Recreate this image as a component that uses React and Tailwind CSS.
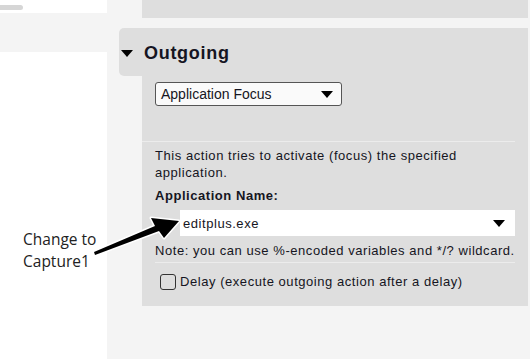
import React from 'react';

const Tri = ({ className = '' }) => (
  <svg width="12" height="7" viewBox="0 0 12 7" className={className}>
    <polygon points="0,0 12,0 6,7" fill="#000" />
  </svg>
);

export default function App() {
  return (
    <div
      className="relative flex w-[530px] h-[359px] overflow-hidden bg-white text-[#151522]"
      style={{ fontFamily: '"Liberation Sans", Arial, sans-serif' }}
    >
      {/* Sidebar */}
      <div className="w-[107px] shrink-0 bg-white">
        <div className="h-[13px] pt-[5px]">
          <div className="w-[23px] h-[5px] rounded-r bg-[#d6d6d6]" />
        </div>
        <div className="h-[39px] bg-[#f4f4f4]" />
      </div>

      {/* Main */}
      <div className="flex-1 flex flex-col bg-[#f4f4f4]">
        <div className="ml-[35px] mr-[2px] h-[18px] bg-[#dedede]" />

        {/* Section header */}
        <div className="mt-[10px] ml-[12px] mr-[2px] h-[48px] flex items-center gap-[11px] pl-[2px] bg-[#dedede] rounded-l-[5px]">
          <Tri className="mt-[3px]" />
          <span className="text-[18px] font-bold leading-none mt-[1px] tracking-[0.7px]">Outgoing</span>
        </div>

        {/* Section body */}
        <div className="ml-[35px] mr-[2px] h-[230px] bg-[#dedede] pt-[6px] pr-[13px]">
          <div className="ml-[13px] w-[187px] h-[24px] flex items-center justify-between pl-[5px] pr-[8px] bg-[#fafafa] border border-[#555] rounded-[3px] text-[14px]">
            <span>Application Focus</span>
            <Tri />
          </div>

          <div className="mt-[35px] h-px bg-[#ececec]" />

          <div className="pl-[13px] pt-[5px] text-[13px] leading-[17px] tracking-[0.55px]">
            <p className="pr-[20px]">This action tries to activate (focus) the specified application.</p>
            <p className="mt-[6px] font-bold">Application Name:</p>
            <div className="mt-[6px] ml-[25px] h-[26px] flex items-center justify-between pl-[3px] pr-[10px] bg-white">
              <span>editplus.exe</span>
              <Tri />
            </div>
            <p className="mt-[6px] whitespace-nowrap">Note: you can use %-encoded variables and */? wildcard.</p>
            <div className="mt-[3px] h-px bg-[#ececec]" />
            <label className="mt-[10px] ml-[5px] flex items-center gap-[4px]">
              <span className="w-[16px] h-[16px] rounded-[3px] border border-[#333]" />
              <span>Delay (execute outgoing action after a delay)</span>
            </label>
          </div>
        </div>
      </div>

      {/* Annotation */}
      <div
        className="absolute left-[23px] top-[228px] text-[15.5px] leading-[22px] text-[#222]"
        style={{ fontFamily: '"Open Sans", "Noto Sans", sans-serif' }}
      >
        <div>Change to</div>
        <div>Capture1</div>
      </div>
      <svg className="absolute left-0 top-0" width="530" height="359" viewBox="0 0 530 359">
        <polygon
          points="95,255 159,231 164,238 179,221 151,218 155,226 94,252"
          fill="#000"
          stroke="#fff"
          strokeWidth="3"
          strokeLinejoin="round"
          paintOrder="stroke"
        />
      </svg>
    </div>
  );
}
